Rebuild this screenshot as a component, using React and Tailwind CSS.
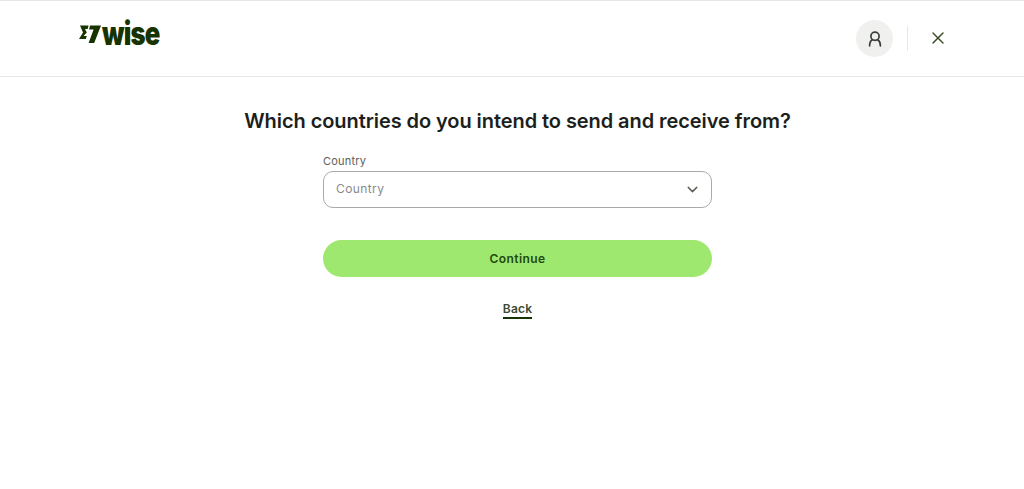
import React from "react";
import { X, ChevronDown } from "lucide-react";

function Logo() {
  return (
    <div className="flex items-end">
      <svg width="22" height="18" viewBox="0 0 22 18" className="shrink-0">
        <path d="M1 0.5h8.6L8.6 4H6l1.8 3.6L4.6 11h3.2l-1 3H0l4-6.4z M11 0.5h11L15.2 18H9.6L14.6 4.4h-4.5z" fill="#163300" />
      </svg>
      <span className="ml-[1px] inline-block origin-left scale-x-[0.8] text-[32px] leading-[18px] font-black tracking-[-1px] text-[#163300] [font-family:Inter,sans-serif]">
        wise
      </span>
    </div>
  );
}

export default function App() {
  return (
    <div className="min-h-[489px] bg-white [font-family:Inter,sans-serif]">
      <header className="h-[77px] border-t border-b border-[#e6e6e6] flex items-start justify-between pl-[79px] pr-[76px]">
        <div className="pt-[24px]">
          <Logo />
        </div>
        <div className="flex items-center pt-[19px]">
          <div className="w-[37px] h-[37px] rounded-full bg-[#f0f0ee] flex items-center justify-center">
            <svg width="18" height="18" viewBox="0 0 18 18" fill="none" stroke="#3a3f3a" strokeWidth="1.7" strokeLinecap="round">
              <circle cx="9" cy="6.2" r="4.1" />
              <path d="M3.6 15.8c0-3 1.4-5.2 2.8-6 M14.4 15.8c0-3-1.4-5.2-2.8-6" />
            </svg>
          </div>
          <div className="w-px h-[25px] bg-[#e6e6e6] ml-[14px] mr-[20px]" />
          <X size={20} strokeWidth={1.7} color="#3c4a2a" className="mb-[2px]" />
        </div>
      </header>
      <main className="flex flex-col items-center pl-[11px]">
        <h1 className="mt-[30px] text-[20px] leading-[28px] font-semibold tracking-[-0.07px] text-[#1c1f1c]">
          Which countries do you intend to send and receive from?
        </h1>
        <div className="w-[389px] mt-[20px]">
          <label className="block text-[11px] leading-[13px] tracking-[0.2px] text-[#5d605b]">Country</label>
          <div className="mt-[3px] h-[37px] rounded-[10px] border border-[#aaaaaa] flex items-center justify-between pl-[12px] pr-[10px]">
            <span className="text-[12px] tracking-[0.4px] text-[#8a8a8a] mb-[1px]">Country</span>
            <ChevronDown size={17} strokeWidth={2} color="#5f5f5a" />
          </div>
          <button className="mt-[32px] w-full h-[37px] rounded-full bg-[#9fe870] text-[12px] font-semibold tracking-[0.4px] text-[#1f4a10]">
            Continue
          </button>
          <div className="mt-[24px] flex justify-center">
            <a className="text-[12px] leading-[16px] font-semibold tracking-[0.2px] text-[#3a4a34] border-b-2 border-[#163300]">Back</a>
          </div>
        </div>
      </main>
    </div>
  );
}
